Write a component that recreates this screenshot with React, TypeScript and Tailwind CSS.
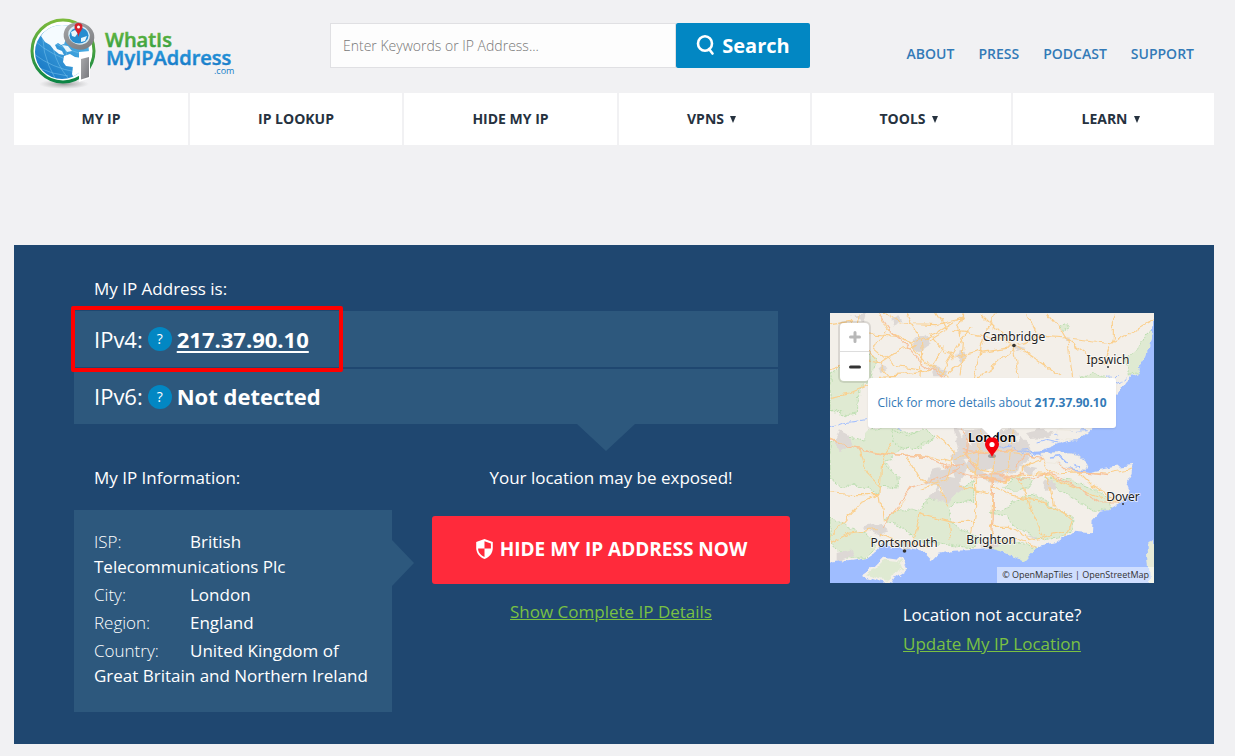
import React from "react";

const headerLinks = ["About", "Press", "Podcast", "Support"];

const navItems = [
  { label: "MY IP", menu: false },
  { label: "IP LOOKUP", menu: false },
  { label: "HIDE MY IP", menu: false },
  { label: "VPNS", menu: true },
  { label: "TOOLS", menu: true },
  { label: "LEARN", menu: true },
];

const details = [
  { label: "ISP:", value: "British Telecommunications Plc" },
  { label: "City:", value: "London" },
  { label: "Region:", value: "England" },
  { label: "Country:", value: "United Kingdom of Great Britain and Northern Ireland" },
];

function Logo() {
  return (
    <svg width="212" height="76" viewBox="0 0 212 76" role="img" aria-label="WhatIsMyIPAddress.com">
      <defs>
        <linearGradient id="ring" x1="0" y1="0" x2="0" y2="1">
          <stop offset="0" stopColor="#7cba3c" />
          <stop offset="1" stopColor="#0c8545" />
        </linearGradient>
        <linearGradient id="ocean" x1="1" y1="0" x2="0" y2="1">
          <stop offset="0" stopColor="#5cc0ee" />
          <stop offset="1" stopColor="#1170c0" />
        </linearGradient>
        <linearGradient id="green" x1="0" y1="0" x2="0" y2="1">
          <stop offset="0" stopColor="#6dbb3a" />
          <stop offset="1" stopColor="#2b9a42" />
        </linearGradient>
        <linearGradient id="blue" x1="0" y1="0" x2="0" y2="1">
          <stop offset="0" stopColor="#2ba2e2" />
          <stop offset="1" stopColor="#1273c2" />
        </linearGradient>
        <linearGradient id="metal" x1="0" y1="0" x2="1" y2="1">
          <stop offset="0" stopColor="#a9a9ab" />
          <stop offset="1" stopColor="#77787c" />
        </linearGradient>
        <radialGradient id="shade">
          <stop offset="0" stopColor="#777" stopOpacity="0.7" />
          <stop offset="1" stopColor="#999" stopOpacity="0" />
        </radialGradient>
        <clipPath id="globe"><circle cx="32" cy="36" r="27" /></clipPath>
      </defs>
      <ellipse cx="34" cy="68" rx="25" ry="5" fill="url(#shade)" />
      <circle cx="33" cy="35" r="31" fill="#fff" stroke="url(#ring)" strokeWidth="3" />
      <circle cx="32" cy="36" r="27" fill="url(#ocean)" />
      <g clipPath="url(#globe)">
        <g fill="none" stroke="#7cc6ee" strokeWidth="0.5">
          <path d="M5 25Q21 40 50 48M4 38Q22 52 46 56M9 16Q24 30 52 38M14 10Q9 35 26 64M26 9Q16 35 38 62M38 8Q28 32 47 59M9 52Q22 58 38 60" />
        </g>
        <path d="M11 20L16 13L26 8L40 7L44 14L40 17L41 23L36 23L34 28L31 29L28 27L25 29L27 33L32 35L34 39L29 38L24 34L20 29L15 26Z" fill="#f5fbff" />
        <path d="M34 40L40 38L45 41L52 42L62 44L63 55L54 62L45 65L42 58L43 51L36 50L33 46Z" fill="#fff" />
        <path d="M32 29L38 30L42 35L37 36Z" fill="#e8f5fc" />
      </g>
      <path d="M49 36L60 35V62L49 66Z" fill="#fff" />
      <path d="M51 43L59 41V61L51 63.500Z" fill="url(#metal)" />
      <ellipse cx="49" cy="20" rx="15.500" ry="13.500" transform="rotate(18 49 20)" fill="url(#metal)" />
      <ellipse cx="49" cy="19" rx="11" ry="9.500" transform="rotate(18 49 19)" fill="#d5ecf7" />
      <ellipse cx="49" cy="19.500" rx="9.500" ry="8" fill="#278dd0" />
      <path d="M41 16L45 14L48 17L45 21L42 20M51 22L57 20L55 25L51 26Z" fill="#e9f6fb" />
      <path d="M48.500 21C48 16 44.500 14 44.500 11a4 4 0 0 1 8 0c0 3-3.500 5-4 10Z" fill="#d4202b" />
      <circle cx="48.500" cy="11" r="1.500" fill="#fff" />
      <g fontFamily="'Open Sans', sans-serif" fontWeight="600">
        <text x="75" y="31" fontSize="20" fill="url(#green)" stroke="url(#green)" strokeWidth="0.5">WhatIs</text>
        <text x="76" y="49" fontSize="20" fill="url(#blue)" stroke="url(#blue)" strokeWidth="0.5">MyIPAddress</text>
        <text x="184" y="58" fontSize="9" fontWeight="400" fill="#1580c8">.com</text>
      </g>
    </svg>
  );
}

function MapArt() {
  return (
    <svg className="block h-full w-full" viewBox="0 0 324 270" preserveAspectRatio="xMidYMid slice" role="img" aria-label="Map of south east England">
      <defs>
        <filter id="rough" x="0" y="0" width="100%" height="100%">
          <feTurbulence type="fractalNoise" baseFrequency="0.09" numOctaves="3" seed="4" result="n" />
          <feDisplacementMap in="SourceGraphic" in2="n" scale="8" xChannelSelector="R" yChannelSelector="G" />
        </filter>
        <clipPath id="land">
          <path d="M-20-20H975L968 60L950 130L920 180L900 192L875 228L858 250L840 300L780 352L750 378L700 388L682 394L635 412L600 415L635 428L670 424L680 450L720 470L780 477L850 462L910 456L908 480L890 511L900 535L875 571L840 590L810 596L785 625L783 661L730 656L680 691L620 703L585 741L530 721L480 705L430 708L370 710L325 720L305 742L280 716L240 708L220 718L190 700L160 690L140 714L110 735L60 745L30 741L-20 750Z" />
        </clipPath>
      </defs>
      <rect width="324" height="270" fill="#9fbdff" />
      <g filter="url(#rough)">
        <g transform="scale(.33333)">
          <g clipPath="url(#land)">
            <rect x="-20" y="-20" width="1020" height="800" fill="#f3efe9" />
            <g fill="#dfead2" stroke="#a5d799" strokeWidth="2" strokeDasharray="7 3">
              <path d="M0 180L30 165L60 145L115 125L140 135L125 195L90 230L85 300L50 305L0 290Z" />
              <path d="M0 390L60 370L100 378L125 350L180 340L230 360L290 350L310 375L270 410L210 405L185 440L155 445L200 490L205 525L155 520L145 545L90 520L30 520L0 495Z" />
              <path d="M160 615L210 590L260 592L300 558L345 560L390 520L430 500L432 565L375 570L355 590L370 635L420 660L450 680L430 705L300 690L260 680L210 640Z" />
              <path d="M0 610L40 630L60 650L110 660L140 700L105 735L50 735L25 710L0 690Z" />
              <path d="M480 600L530 580L590 545L630 555L680 590L730 610L725 650L690 675L640 680L600 665L560 645L530 610Z" />
              <path d="M650 495L715 500L780 520L840 560L845 590L790 595L740 560L690 535Z" />
              <path d="M475 700L520 675L565 690L625 703L585 742L530 725Z" />
              <path d="M515 520L560 490L610 500L600 525L560 535Z" />
              <path d="M895 190L890 130L920 110L950 60L980 40L975 150Z" />
              <path d="M755 190L790 180L845 205L800 215ZM690 40L710 30L720 45L700 55Z" />
              <path d="M180 350L235 370L280 345L315 370L250 410L200 395Z" />
            </g>
            <g fill="#ddd8d5">
              <path d="M370 345L410 350L480 340L555 350L580 380L610 410L590 450L555 475L500 510L450 495L415 470L375 465L360 430L385 410Z" />
              <path d="M285 510L310 470L360 460L420 465L390 505L400 530L350 570L300 555L320 520Z" />
              <path d="M245 85L290 65L302 90L270 115L250 105ZM375 125L395 110L410 130L390 145ZM300 160L350 170L340 190L310 190ZM30 355L60 370L70 395L25 420L15 385ZM100 645L150 630L180 655L145 665ZM180 20L205 10L215 25L195 35ZM145 155L170 165L155 175ZM585 360L640 350L670 355L655 375L600 378ZM635 510L670 500L680 525L655 530ZM705 70L720 80L705 90ZM545 95L585 105L560 115ZM60 10L110 0L105 25ZM570 455L620 465L590 485Z" />
              <path d="M180 690L230 685L260 700L225 715ZM20 720L60 710L70 730L20 745ZM445 690L505 690L510 702L450 704ZM590 670L615 665L610 675ZM860 555L885 560L870 573Z" />
            </g>
            <g fill="#f3efe9">
              <path d="M405 380L425 375L420 400ZM460 475L490 465L485 490ZM400 440L425 440L410 455ZM350 490L370 475L375 495ZM550 370L575 365L565 385ZM320 530L335 520L340 540ZM385 350L410 355L395 370ZM515 490L540 480L530 495Z" />
            </g>
            <g fill="none" stroke="#9fbdff" strokeWidth="3">
              <path d="M480 390L520 405L540 398L560 412L600 410L635 420M620 390L650 382L685 390M0 345L40 330L80 325L110 320M670 365L740 352L770 350M680 380L720 365L760 370M830 190L855 215L890 195M850 200L860 190M170 330L205 345L215 355M575 420L590 415L612 425" />
            </g>
            <g fill="none" stroke="#fbcf8c" strokeWidth="3.4">
              <path d="M145 0L170 50L240 90L300 160L350 190L390 260M0 35L60 25L90 60L200 70L250 90L320 60L400 10M85 0L75 60L145 150L230 250M0 170L80 140L150 150L210 110L260 100M160 0L210 30L320 35L400 15M230 0L270 75L275 120L270 195M300 65L350 120L395 130L450 115L550 100M400 0L385 45L400 90L390 190M450 0L480 30L530 80L550 105L565 195M550 95L640 70L710 75L850 90L970 20M650 0L690 45L710 80L725 195M560 100L620 140L690 190M850 0L850 80L820 150M710 80L780 130L840 155M370 55L450 70L520 75M420 40L330 190M500 0L465 60L430 195" />
              <path d="M130 100L200 160L290 175M150 190L230 185L310 170M170 50L130 100M340 100L300 160M410 130L350 180M320 0L350 50L300 80M0 250L60 240L120 215M550 110L480 170L440 195M590 0L620 60L640 70" />
              <path d="M0 375L70 405L200 425L290 430L360 450M0 540L80 545L150 545L155 440L185 390M90 410L110 480L150 520M150 545L160 620L190 600L225 560M0 690L60 660L140 650M145 660L200 685L300 700M250 690L270 600L370 625L435 625M370 440L440 410L555 420L620 430M400 420L450 470L500 480L560 465M450 350L445 420L435 490L440 580L425 660M490 350L490 420L490 510L485 630L478 700M550 350L540 430L530 500L470 500M410 460L440 490L520 505L560 490L600 480L650 485L720 520L800 550L870 570M650 480L660 520L670 575L725 620M560 490L590 540L605 600L640 680M490 520L550 550L620 560L680 590L725 610M480 640L540 640L600 680L700 655M640 440L660 480L740 477L840 480L910 465M750 480L790 520L870 570M650 430L600 450L560 490M725 620L700 690M355 630L360 680M230 430L260 490L330 520L350 580M150 545L90 570L30 640L0 670M500 690L560 675L620 700M320 370L380 420M390 520L480 540M370 420L350 500L275 530" />
            </g>
            <g fill="none" stroke="#f7c19b" strokeWidth="3.6">
              <path d="M0 378L70 405L180 425L285 430L345 460L400 455M390 465L320 500L240 520L195 585L160 645M440 490L500 485L550 500L620 490L665 485L750 530L810 570L870 570M440 470L405 430L410 370L380 330M560 460L590 425L670 440L705 470L840 485M145 0L190 65L240 105L280 155L340 195M490 500L490 620L480 700M385 480L440 495L520 500L580 480M395 410L440 412L500 420L560 410" />
            </g>
          </g>
          <g fill="#f3efe9" stroke="#e7e1cf" strokeWidth="1">
            <path d="M632 420L690 418L745 425L775 454L765 470L710 465L680 450L650 445Z" />
            <path d="M680 350L770 355L745 382L680 378Z" />
          </g>
          <path d="M100 785L130 765L160 735L215 743L225 765L195 785L180 808L145 800Z" fill="#dfead2" stroke="#f3efe9" strokeWidth="7" />
          <path d="M952 690L975 680V810H960Z" fill="#e6ead7" />
          <path d="M660 435L690 431L710 450M730 455L750 460" stroke="#9fbdff" strokeWidth="5" fill="none" />
        </g>
      </g>
      <g fill="#333">
        <circle cx="184" cy="32.500" r="1.800" />
        <circle cx="278" cy="54" r="1" />
        <circle cx="293" cy="191" r="1" />
        <circle cx="74.500" cy="238" r="1.800" />
        <circle cx="160.500" cy="234.500" r="1.600" />
      </g>
      <g fontFamily="'Noto Sans', sans-serif" fontSize="12" fontWeight="400" fill="#222" stroke="#fff" strokeWidth="1.5" strokeOpacity="0.75" paintOrder="stroke" textAnchor="middle">
        <text x="184" y="28">Cambridge</text>
        <text x="278" y="51">Ipswich</text>
        <text x="293" y="188">Dover</text>
        <text x="74" y="234">Portsmouth</text>
        <text x="161" y="231">Brighton</text>
        <text x="162" y="129" fontSize="13" fontWeight="600" fill="#000">London</text>
      </g>
      <ellipse cx="162" cy="143" rx="4" ry="2" fill="#555" opacity="0.4" />
      <path d="M162 144C160 139 155 136 155 131a7 7 0 0 1 14 0c0 5-5 8-7 13Z" fill="#f5000c" />
      <circle cx="162" cy="131.500" r="2.600" fill="#fff" />
    </svg>
  );
}

function LocationMap() {
  return (
    <div className="relative h-[270px] w-full overflow-hidden">
      <MapArt />
      <div className="absolute top-2.5 left-2.5 flex w-[29px] flex-col rounded bg-white shadow-[0_0_0_2px_rgba(0,0,0,0.1)]">
        <button type="button" aria-label="Zoom in" className="flex h-[29px] items-center justify-center border-b border-[#ddd]">
          <svg width="12" height="12" viewBox="0 0 12 12" stroke="#b8b8b8" strokeWidth="3" strokeLinecap="round"><path d="M6 1.500V10.500M1.500 6H10.500" /></svg>
        </button>
        <button type="button" aria-label="Zoom out" className="flex h-[29px] items-center justify-center">
          <svg width="12" height="12" viewBox="0 0 12 12" stroke="#333" strokeWidth="3" strokeLinecap="round"><path d="M1.500 6H10.500" /></svg>
        </button>
      </div>
      <div className="absolute top-[65px] left-[38px] flex h-[50px] w-[248px] items-center justify-center rounded-[3px] bg-white shadow-[0_1px_2px_rgba(0,0,0,0.1)]">
        <a href="#details" className="text-xs whitespace-nowrap text-[#337ab7]">
          Click for more details about <b className="font-bold">217.37.90.10</b>
        </a>
        <svg className="absolute top-full left-[114px]" width="20" height="10" viewBox="0 0 20 10" fill="#fff"><path d="M0 0H20L10 10Z" /></svg>
      </div>
      <p className="absolute right-0 bottom-0 bg-white/50 px-[5px] text-[9px] leading-4 whitespace-nowrap text-[#333]">
        <a href="#tiles">© OpenMapTiles</a> | <a href="#osm">OpenStreetMap</a>
      </p>
    </div>
  );
}

function HelpButton({ label }: { label: string }) {
  return (
    <button type="button" aria-label={label} className="mx-[5px] flex h-6 w-6 items-center justify-center rounded-full bg-[#0287c3] text-sm font-normal">
      ?
    </button>
  );
}

export default function App() {
  return (
    <div className="bg-[#f1f1f3] pr-[21px] pb-3 pl-3.5 font-['Open_Sans',sans-serif] text-white">
      <header className="flex h-[93px] items-start">
        <a href="#home" className="mt-4 ml-4 shrink-0"><Logo /></a>
        <form className="mt-[23px] ml-[88px] flex h-[45px] w-[480px] shrink-0" onSubmit={(e) => e.preventDefault()}>
          <input
            type="text"
            aria-label="Enter Keywords or IP Address"
            placeholder="Enter Keywords or IP Address..."
            className="min-w-0 flex-1 border border-[#e0e0e3] bg-[#fdfdfd] px-3 text-sm font-light text-gray-700 placeholder:text-[#777]"
          />
          <button type="submit" className="flex w-[134px] items-center justify-center gap-2 rounded-xs bg-[#0287c3] text-xl font-bold">
            <svg width="18" height="21" viewBox="0 0 18 21" fill="none" stroke="#fff" strokeWidth="2.6" strokeLinecap="round">
              <ellipse cx="9" cy="8.500" rx="7" ry="7.200" />
              <path d="M13 14L16.500 18.500" />
            </svg>
            Search
          </button>
        </form>
        <nav aria-label="Site" className="mt-11 mr-5 ml-auto flex gap-6 text-sm font-semibold text-[#337ab7] uppercase">
          {headerLinks.map((link) => <a key={link} href={"#" + link}>{link}</a>)}
        </nav>
      </header>

      <nav aria-label="Main" className="grid grid-cols-[174fr_212fr_213fr_191fr_199fr_201fr] gap-0.5 text-sm font-bold text-[#26323f]">
        {navItems.map((item) => (
          <a key={item.label} href={"#" + item.label} className="flex h-13 items-center justify-center gap-1.5 bg-white">
            {item.label}
            {item.menu && <svg className="mr-1.5" width="6" height="7" viewBox="0 0 6 7" fill="currentColor"><path d="M0 0H6L3 7Z" /></svg>}
          </a>
        ))}
      </nav>

      <main className="mt-[100px] flex gap-10 bg-[#1f4770] px-[60px] pt-8 pb-8 text-[17px]">
        <div className="min-w-0 flex-1">
          <h1 className="ml-5 h-[34px] leading-6">My IP Address is:</h1>
          <div className="relative mr-3 flex flex-col gap-0.5 text-[22px]">
            <div className="flex h-14 items-center bg-[#2d587d] pl-5">
              IPv4:
              <HelpButton label="What is IPv4?" />
              <a href="#ip" className="font-bold underline decoration-2 underline-offset-3">217.37.90.10</a>
            </div>
            <div className="flex h-[55px] items-center bg-[#2d587d] pl-5">
              IPv6:
              <HelpButton label="What is IPv6?" />
              <strong className="font-bold">Not detected</strong>
            </div>
            <div className="absolute -top-[5px] -left-[3px] h-[66px] w-[272px] rounded-xs border-4 border-[#ff0000]" />
            <svg className="absolute top-full right-[143px]" width="58" height="27" viewBox="0 0 58 27" fill="#2d587d"><path d="M0 0H58L29 27Z" /></svg>
          </div>

          <div className="mt-[42px] grid grid-cols-[318px_minmax(0,1fr)] gap-x-10">
            <section>
              <h2 className="ml-5 h-11 leading-6">My IP Information:</h2>
              <div className="relative h-[202px] bg-[#2d587d] px-5 pt-[19px]">
                <ul className="flex flex-col gap-[3px]">
                  {details.map((row) => (
                    <li key={row.label} className="leading-[25px]">
                      <span className="inline-block w-24 font-light">{row.label}</span>
                      <span>{row.value}</span>
                    </li>
                  ))}
                </ul>
                <svg className="absolute top-[30px] left-full" width="22" height="46" viewBox="0 0 22 46" fill="#2d587d"><path d="M0 0L22 23L0 46Z" /></svg>
              </div>
            </section>
            <section className="flex flex-col items-center">
              <p className="h-[50px] leading-6">Your location may be exposed!</p>
              <button type="button" className="flex h-[68px] w-full items-center justify-center gap-1.5 rounded-[3px] bg-[#ff2a3b] pb-0.5 text-[19px] font-bold">
                <svg width="19" height="22" viewBox="0 0 19 22">
                  <path d="M9.500 1L17.800 4V10C17.800 15 14.500 19 9.500 21C4.500 19 1.200 15 1.200 10V4Z" fill="#fff" />
                  <path d="M9.500 3.200L15.900 5.400V10.500H9.500ZM3.100 10.500H9.500V18.900C5.800 17.300 3.100 14.500 3.100 10.500Z" fill="#ff2a3b" />
                </svg>
                HIDE MY IP ADDRESS NOW
              </button>
              <a href="#complete" className="mt-4 leading-6 text-[#7ac143] underline">Show Complete IP Details</a>
            </section>
          </div>
        </div>

        <aside className="mt-9 flex w-[324px] shrink-0 flex-col items-center">
          <LocationMap />
          <p className="mt-5 leading-6">Location not accurate?</p>
          <a href="#update" className="mt-[5px] leading-6 text-[#7ac143] underline">Update My IP Location</a>
        </aside>
      </main>
    </div>
  );
}
